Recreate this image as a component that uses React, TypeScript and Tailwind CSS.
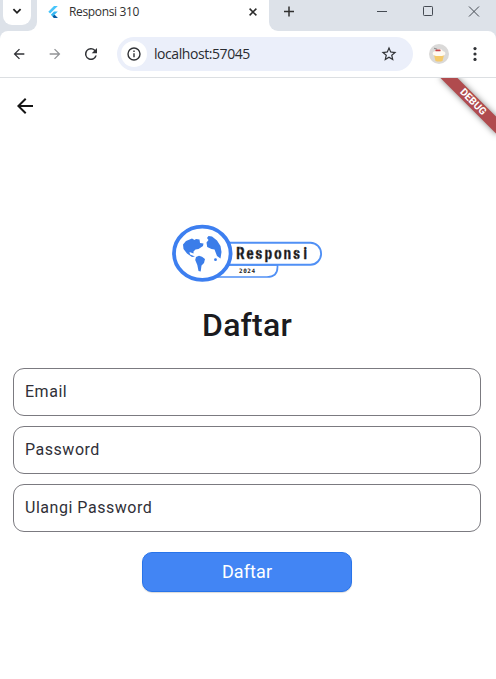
import type { ReactNode } from "react";

function Logo() {
  return (
    <svg width="152" height="60" viewBox="171 223 152 60" className="block">
      <path d="M215 265H277.5V267Q277.5 277 267 277H215Z" fill="#fff" stroke="#5090f5" strokeWidth="1.7" />
      <path d="M220 242.7H310.5A10.6 11 0 0 1 310.5 264.7H220Z" fill="#fff" stroke="#5090f5" strokeWidth="1.9" />
      <ellipse cx="202.3" cy="253.3" rx="28.3" ry="26.6" fill="#fff" stroke="#3d7ff0" strokeWidth="3.8" />
      <g fill="#3b7de9">
        <path d="M183 244.5L186 241L192 238.5L194.5 240L196 239L199.5 239.5L200 243L203.5 243.5L203 246L198.5 249L195.5 249.5L193.5 251.5L193.5 253.5L189.5 252L190 254.5L195 256.5L192 257L187 253.5L183.5 249Z" />
        <path d="M196 257L199 255.8L202 256.8L205 259L204 263L201.5 265.5L200.7 271.5L198.5 271L197.3 265L195.2 260Z" />
        <path d="M208.5 236L212 236.5L217 240.5L220.5 246L221.5 252L220.5 258.5L217 256L214.5 249.5L211.5 249L207.2 247L206.5 242.5L208.5 240L207 238Z" />
        <circle cx="215.5" cy="259.7" r="1.4" />
      </g>
      <g transform="translate(236 259) scale(.76 1)">
        <text x="0.4 13.8 25.6 37.8 50.4 62.8 75.4 88.8" y="0" fontFamily="Roboto, sans-serif" fontWeight="700" fontSize="17" fill="#1c1c1c" stroke="#1c1c1c" strokeWidth=".5">Responsi</text>
      </g>
      <path d="M240 246.5V259.5M250 249.5V252M250 256.5V260M259 249V252M259 256.5V260M268.1 249.5V259.5M278.1 249V260M287.1 249V259.5M297 249V252M297 256.5V260" stroke="#fff" strokeOpacity=".75" strokeWidth=".7" />
      <text x="239" y="273" fontFamily="'DejaVu Sans Mono', monospace" fontWeight="700" fontSize="6" textLength="16" fill="#222">2024</text>
    </svg>
  );
}

function Arrow({ size, color, className = "" }: { size: number; color: string; className?: string }) {
  return (
    <svg width={size} height={size} viewBox="0 0 24 24" fill={color} className={className}>
      <path d="M20 11H7.83l5.59-5.59L12 4l-8 8 8 8 1.41-1.41L7.83 13H20v-2z" />
    </svg>
  );
}

function TabStrip() {
  return (
    <div className="flex h-[31px] bg-white">
      <div className="w-[37px] rounded-br-[9px] bg-[#dde2e9] pl-[3px]">
        <div className="flex h-[25px] w-7 items-center justify-center rounded-b-[9px] bg-white">
          <svg width="10" height="7" viewBox="0 0 10 7" className="-mt-[3px]" fill="none" stroke="#1f1f1f" strokeWidth="1.8"><path d="M1.4 1.2L5 4.8L8.6 1.2" /></svg>
        </div>
      </div>
      <div className="flex h-[23px] w-[232px] items-center pl-[11px]">
        <svg width="10" height="12" viewBox="0 0 10 12">
          <path d="M6 0H9.8L2.2 7.6L.3 5.7Z" fill="#47c5fb" />
          <path d="M6 5.5H9.8L6.5 8.7L9.8 12H6L2.8 8.7Z" fill="#35b7f2" />
          <path d="M4.6 10.4L6.5 8.7L9.8 12H6Z" fill="#0b579d" />
        </svg>
        <span className="ml-[11px] w-[170px] text-[12px] leading-none tracking-[-0.35px] text-[#303030]">Responsi 310</span>
        <svg width="8" height="8" viewBox="0 0 8 8" className="ml-[10px]" stroke="#2b2b2b" strokeWidth="1.5"><path d="M.6 .6L7.4 7.4M7.4 .6L.6 7.4" /></svg>
      </div>
      <div className="flex flex-1 rounded-bl-[9px] bg-[#dde2e9] pl-[15px]">
        <svg width="10" height="23" viewBox="0 0 10 23" stroke="#303030" strokeWidth="1.5"><path d="M0 11.5H10M5 6.5V16.5" /></svg>
        <svg width="104" height="23" viewBox="0 0 104 23" className="ml-[83px]" stroke="#454b53" strokeWidth="1" fill="none">
          <path d="M0 11.5H10" /><rect x="46.5" y="6.5" width="9" height="9" rx=".8" /><path d="M92 6.5L102 16.5M102 6.5L92 16.5" />
        </svg>
      </div>
    </div>
  );
}

function Toolbar() {
  return (
    <div className="bg-[#dde2e9]">
      <div className="flex h-[47px] items-center rounded-t-[8px] border-b border-[#dcdfe2] bg-white pl-[11px]">
        <Arrow size={16} color="#303236" />
        <Arrow size={16} color="#929497" className="ml-5 rotate-180" />
        <svg width="18" height="18" viewBox="0 0 24 24" fill="#303236" className="ml-[19px]">
          <path d="M17.65 6.35A8 8 0 1 0 19.73 14h-2.08A6 6 0 1 1 12 6c1.66 0 3.14.69 4.22 1.78L13 11h7V4z" />
        </svg>
        <div className="ml-[17px] flex h-[34px] w-[296px] items-center rounded-full bg-[#ebeffa] pl-1">
          <div className="flex size-[26px] items-center justify-center rounded-full bg-white">
            <svg width="14" height="14" viewBox="0 0 14 14" fill="none" stroke="#303236" strokeWidth="1.4"><circle cx="7" cy="7" r="6" /><path d="M7 6.2V10.2M7 3.6V5" /></svg>
          </div>
          <span className="ml-[7px] w-[226px] text-[14px] leading-none tracking-[-0.43px] text-[#292b30]">localhost:57045</span>
          <svg width="18" height="18" viewBox="0 0 24 24" fill="#303236"><path d="M22 9.24l-7.19-.62L12 2 9.19 8.63 2 9.24l5.46 4.73L5.82 21 12 17.27 18.18 21l-1.63-7.03L22 9.24zM12 15.4l-3.76 2.27 1-4.28-3.32-2.88 4.38-.38L12 6.1l1.71 4.04 4.38.38-3.32 2.88 1 4.28L12 15.4z" /></svg>
        </div>
        <svg width="20" height="20" viewBox="0 0 20 20" className="ml-4">
          <circle cx="10" cy="10" r="10" fill="#dad9d8" />
          <path d="M5 11H15L13.5 17Q10 18 6.5 17Z" fill="#f4c96a" />
          <path d="M3.7 10Q3.2 7.8 6 7.3Q7 4.6 10 5Q13 4.7 14 7.3Q16.8 7.8 16.3 10Q15.5 12.2 10 12Q4.5 12.2 3.7 10Z" fill="#fffaf1" />
          <path d="M7.2 6.4H10.8" stroke="#c54044" strokeWidth="1.7" strokeLinecap="round" />
          <path d="M8.2 5.2L5 4.2" stroke="#666" strokeWidth=".7" />
        </svg>
        <svg width="4" height="16" viewBox="0 0 4 16" className="ml-6" fill="#303236"><circle cx="2" cy="2.6" r="1.6" /><circle cx="2" cy="8" r="1.6" /><circle cx="2" cy="13.4" r="1.6" /></svg>
      </div>
    </div>
  );
}

function Field({ children }: { children: ReactNode }) {
  return <div className="flex h-12 items-center rounded-[11px] border border-[#7b7a80] pb-px pl-[11px] text-[16px] leading-6 tracking-[0.53px] text-[#303038]">{children}</div>;
}

export default function App() {
  return (
    <div className="h-[679px] w-[496px] overflow-hidden bg-white font-['Open_Sans','Noto_Sans',sans-serif]">
      <TabStrip />
      <Toolbar />
      <main className="relative flex h-[601px] flex-col overflow-hidden pr-[15px] pl-[13px] font-[Roboto,sans-serif]">
        <Arrow size={24} color="#151515" className="mt-4" />
        <div className="mt-[105px] flex justify-center"><Logo /></div>
        <h1 className="mt-[22px] text-center text-[32px] leading-10 font-medium tracking-[0.2px] text-[#1b1b20]">Daftar</h1>
        <form className="mt-[23px] flex flex-col gap-[10px]">
          <Field>Email</Field>
          <Field>Password</Field>
          <Field>Ulangi Password</Field>
          <button type="button" className="mt-[10px] h-10 w-[210px] self-center rounded-[10px] border border-[#2874ea] bg-[#4285f4] text-[18px] leading-none tracking-[0.1px] text-white shadow-[0_1px_1px_rgba(0,0,0,0.15)]">Daftar</button>
        </form>
        <div className="absolute top-[17.5px] left-[433px] flex h-3 w-20 rotate-45 items-center justify-center bg-[#b04b4e] text-[10.2px] leading-none font-bold text-white shadow-[0_0_6px_rgba(0,0,0,0.5)]">DEBUG</div>
      </main>
    </div>
  );
}
